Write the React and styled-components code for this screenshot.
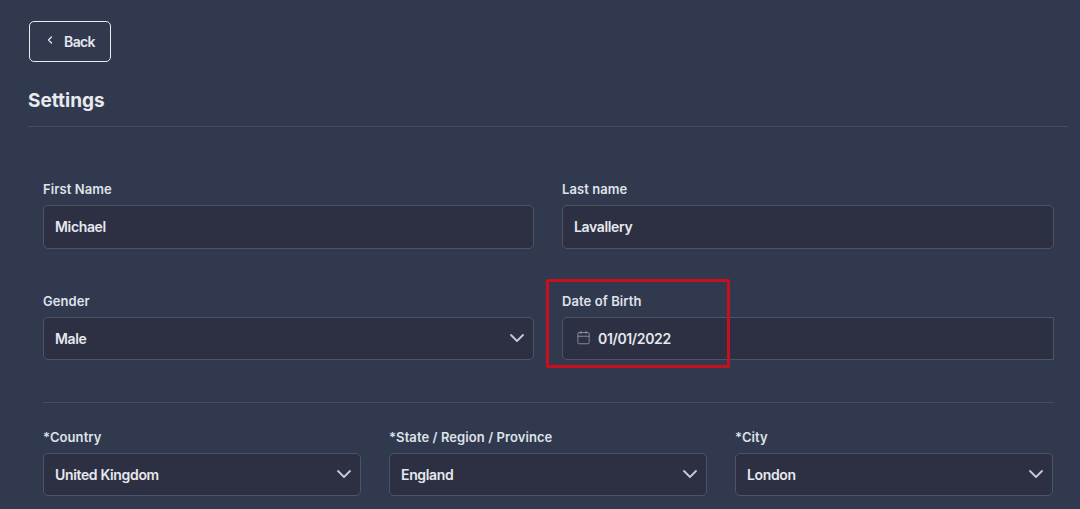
import React from 'react';
import styled, { createGlobalStyle } from 'styled-components';
import { ChevronLeft, ChevronDown, Calendar } from 'lucide-react';

const GlobalStyle = createGlobalStyle`
  html, body {
    margin: 0;
    height: 100%;
    overflow: hidden;
    background: #31394f;
  }
  * {
    box-sizing: border-box;
  }
`;

const Page = styled.div`
  width: 1080px;
  height: 509px;
  padding: 21px 12px 0 28px;
  background: #31394f;
  color: #e6e8ee;
  font-family: 'Inter', 'Liberation Sans', sans-serif;
  overflow: hidden;
`;

const BackButton = styled.button`
  display: flex;
  align-items: center;
  gap: 8px;
  width: 82px;
  height: 41px;
  margin-left: 1px;
  padding: 0 0 0 14px;
  background: transparent;
  border: 1px solid #e8eaf0;
  border-radius: 5px;
  color: #e6e8ee;
  font-family: inherit;
  font-size: 14px;
  font-weight: 600;
  letter-spacing: -0.6px;
`;

const BackIcon = styled(ChevronLeft)`
  margin: -3px 0 0 0;
`;

const Title = styled.h1`
  margin: 0;
  padding: 28px 0 14px;
  height: 65px;
  border-bottom: 1px solid #454c63;
  font-family: 'Inter', sans-serif;
  font-size: 19px;
  line-height: 22px;
  font-weight: 700;
  color: #e8eaf0;
`;

const Form = styled.div`
  padding: 54px 14px 0 15px;
`;

const Row = styled.div`
  display: grid;
  grid-template-columns: ${(p) => (p.$cols === 3 ? '318px 318px 318px' : '491px 492px')};
  column-gap: 28px;
  margin-bottom: ${(p) => p.$gap || 0}px;
`;

const Field = styled.div`
  position: relative;
  display: flex;
  flex-direction: column;
  gap: 8px;
`;

const Label = styled.label`
  font-size: 13px;
  line-height: 16px;
  font-weight: 600;
  letter-spacing: 0.08px;
  color: #dfe2e9;
`;

const Control = styled.div`
  display: flex;
  align-items: center;
  height: ${(p) => p.$h || 43}px;
  padding: 0 4px 0 11px;
  background: #2c3042;
  border: 1px solid #4e5467;
  border-radius: ${(p) => (p.$date ? '5px 0 0 5px' : '5px')};
  font-size: 14px;
  font-weight: 600;
  letter-spacing: -0.35px;
  color: #e6e8ee;
`;

const Value = styled.span`
  flex: 1;
  margin-top: -1px;
`;

const DateIcon = styled(Calendar)`
  margin: -2px 7px 0 2px;
  color: #8f94a3;
`;

const Arrow = styled(ChevronDown)`
  margin-top: -1px;
  color: #c6cad4;
`;

const Divider = styled.div`
  height: 1px;
  margin-bottom: 26px;
  background: #454c63;
`;

const Highlight = styled.div`
  position: absolute;
  left: -16px;
  top: -14px;
  width: 184px;
  height: 89px;
  border: 3px solid #c8101c;
  border-radius: 2px;
  pointer-events: none;
`;

const SelectField = ({ label, value }) => (
  <Field>
    <Label>{label}</Label>
    <Control>
      <Value>{value}</Value>
      <Arrow size={24} strokeWidth={1.8} />
    </Control>
  </Field>
);

export default function App() {
  return (
    <Page>
      <GlobalStyle />
      <BackButton>
        <BackIcon size={12} strokeWidth={2.6} />
        Back
      </BackButton>
      <Title>Settings</Title>
      <Form>
        <Row $gap={44}>
          <Field>
            <Label>First Name</Label>
            <Control $h={44}>
              <Value>Michael</Value>
            </Control>
          </Field>
          <Field>
            <Label>Last name</Label>
            <Control $h={44}>
              <Value>Lavallery</Value>
            </Control>
          </Field>
        </Row>
        <Row $gap={42}>
          <SelectField label="Gender" value="Male" />
          <Field>
            <Label>Date of Birth</Label>
            <Control $date>
              <DateIcon size={15} strokeWidth={1.4} />
              <Value>01/01/2022</Value>
            </Control>
            <Highlight />
          </Field>
        </Row>
        <Divider />
        <Row $cols={3}>
          <SelectField label="*Country" value="United Kingdom" />
          <SelectField label="*State / Region / Province" value="England" />
          <SelectField label="*City" value="London" />
        </Row>
      </Form>
    </Page>
  );
}
